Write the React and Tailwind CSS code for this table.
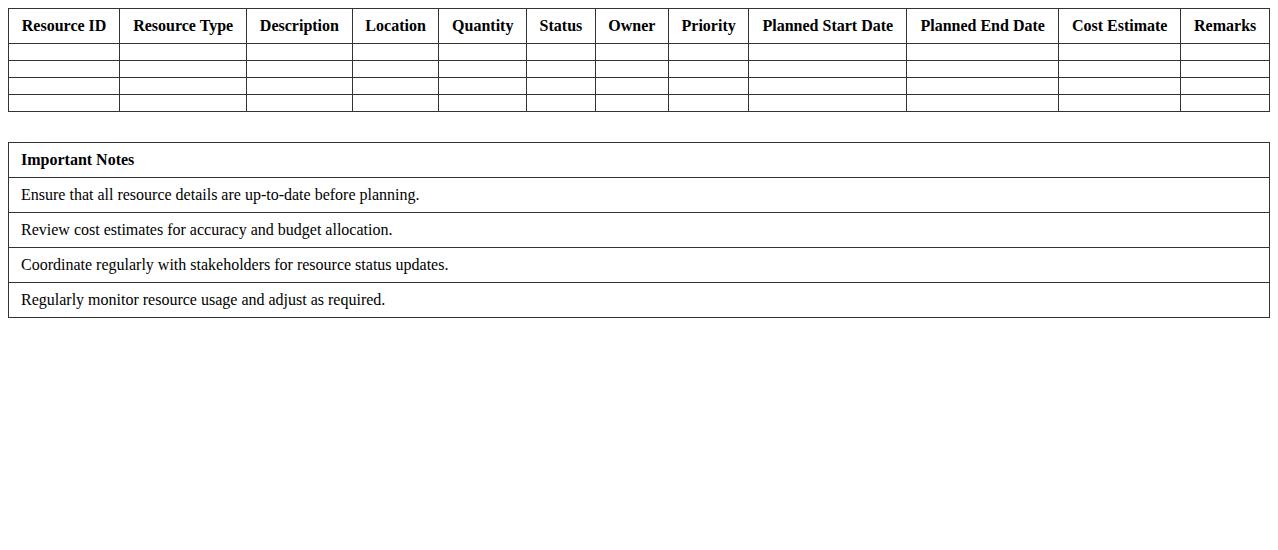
const cols = ['Resource ID','Resource Type','Description','Location','Quantity','Status','Owner','Priority','Planned Start Date','Planned End Date','Cost Estimate','Remarks']
const notes = [
  'Ensure that all resource details are up-to-date before planning.',
  'Review cost estimates for accuracy and budget allocation.',
  'Coordinate regularly with stakeholders for resource status updates.',
  'Regularly monitor resource usage and adjust as required.',
]

export default function App(){
  return (
    <div className="p-2 bg-white text-black text-[16px] font-['Liberation_Serif',serif]">
      <table className="w-full border-collapse border border-[#333]">
        <thead>
          <tr>
            {cols.map(c => (
              <th key={c} className="border border-[#333] px-3 py-2 font-bold text-center leading-[18px]">{c}</th>
            ))}
          </tr>
        </thead>
        <tbody>
          {[0,1,2,3].map(r => (
            <tr key={r}>
              {cols.map(c => <td key={c} className="border border-[#333] px-3 py-2"></td>)}
            </tr>
          ))}
        </tbody>
      </table>

      <table className="w-full border-collapse border border-[#333] mt-[30px]">
        <thead>
          <tr><th className="border border-[#333] px-3 py-2 text-left font-bold leading-[18px]">Important Notes</th></tr>
        </thead>
        <tbody>
          {notes.map(n => (
            <tr key={n}><td className="border border-[#333] px-3 py-2 leading-[18px]">{n}</td></tr>
          ))}
        </tbody>
      </table>
    </div>
  )
}
